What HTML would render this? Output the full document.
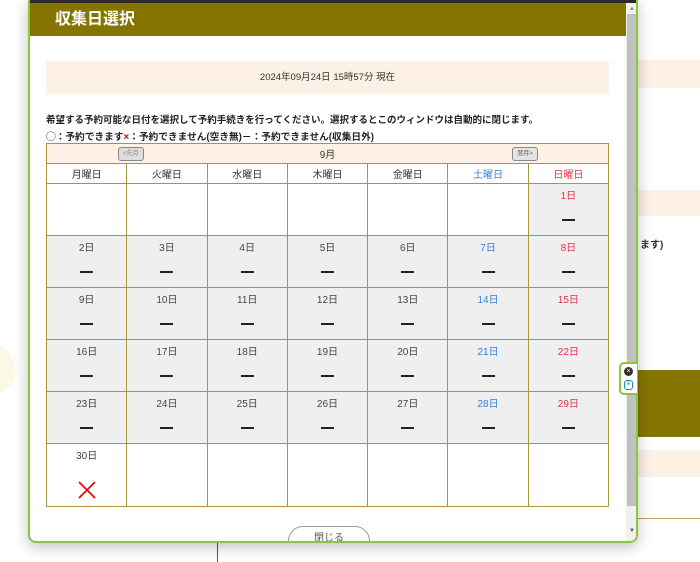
<!DOCTYPE html>
<html><head><meta charset="utf-8"><style>
*{margin:0;padding:0;box-sizing:border-box}
body{width:700px;height:562px;overflow:hidden;background:#fff;font-family:"Liberation Sans","Noto Sans CJK JP",sans-serif;position:relative;color:#333}
.abs{position:absolute}
.modal{left:28px;top:0;width:610px;height:543px;background:#fff;border:2px solid #8cc63f;border-top:none;border-radius:0 0 8px 8px;box-shadow:0 4px 14px rgba(0,0,0,.25);overflow:hidden}
table{border-collapse:collapse;position:absolute;left:16px;top:143px;width:563px;table-layout:fixed;font-size:10px}
td{border:1px solid #a8963a;text-align:center;vertical-align:top}
.hd td{height:20px;vertical-align:middle}
.r td{height:52px;background:#efefef}
.r td.w{background:#fff}
.r6 td{height:63px;background:#fff}
.d{display:block;margin-top:3px;font-size:10px;color:#444}
.dash{display:block;width:13px;height:2px;background:#222;margin:17px auto 0}
.sa{color:#3b7dd8!important}.su{color:#e0344e!important}
</style></head><body>
<div class="abs" style="left:637px;top:60px;width:63px;height:28px;background:#fdf1e6"></div>
<div class="abs" style="left:637px;top:190px;width:63px;height:26px;background:#fdf1e6"></div>
<div class="abs" style="left:640px;top:236px;font-size:10px;font-weight:bold">ます)</div>
<div class="abs" style="left:637px;top:370px;width:63px;height:67px;background:#857500"></div>
<div class="abs" style="left:637px;top:450px;width:63px;height:27px;background:#fdf1e6"></div>
<div class="abs" style="left:218px;top:518px;width:482px;height:1px;background:#b9a65a"></div>
<div class="abs" style="left:217px;top:540px;width:1px;height:22px;background:#555"></div>
<div class="abs" style="left:-30px;top:345px;width:45px;height:50px;border-radius:50%;background:#fdf8e4"></div>

<div class="abs modal">
<div class="abs" style="left:0;top:0;width:608px;height:3px;background:#2b2b2b"></div>
<div class="abs" style="left:0;top:3px;width:596px;height:33px;background:#857500;color:#fff;font-weight:bold;font-size:16px;line-height:33px;padding-left:25px">収集日選択</div>
<div class="abs" style="left:16px;top:61px;width:563px;height:33px;background:#fdf1e6;font-size:9.5px;text-align:center;line-height:33px;color:#333">2024年09月24日 15時57分 現在</div>
<div class="abs" style="left:16px;top:112px;font-size:9.5px;font-weight:bold;color:#222;white-space:nowrap">希望する予約可能な日付を選択して予約手続きを行ってください。選択するとこのウィンドウは自動的に閉じます。</div>
<div class="abs" style="left:16px;top:129px;font-size:9.7px;font-weight:bold;color:#222;white-space:nowrap">◯：予約できます<span style="color:#e00">×</span>：予約できません(空き無)－：予約できません(収集日外)</div>
<table>
<tr class="hd"><td colspan="7" style="background:#fdf1e6;position:relative">9月
<span class="abs" style="left:71px;top:3px;width:26px;height:14px;border:1px solid #888;border-radius:3px;background:#ddd;font-size:6px;line-height:12px;color:#888">&lt;先月</span>
<span class="abs" style="left:465px;top:3px;width:26px;height:14px;border:1px solid #888;border-radius:3px;background:#e4e4e4;font-size:6px;line-height:12px;color:#555">翌月&gt;</span></td></tr>
<tr class="hd"><td>月曜日</td><td>火曜日</td><td>水曜日</td><td>木曜日</td><td>金曜日</td><td class="sa">土曜日</td><td class="su">日曜日</td></tr>
<tr class="r"><td class="w"></td><td class="w"></td><td class="w"></td><td class="w"></td><td class="w"></td><td class="w"></td><td><span class="d su">1日</span><span class="dash"></span></td></tr>
<tr class="r"><td><span class="d">2日</span><span class="dash"></span></td><td><span class="d">3日</span><span class="dash"></span></td><td><span class="d">4日</span><span class="dash"></span></td><td><span class="d">5日</span><span class="dash"></span></td><td><span class="d">6日</span><span class="dash"></span></td><td><span class="d sa">7日</span><span class="dash"></span></td><td><span class="d su">8日</span><span class="dash"></span></td></tr>
<tr class="r"><td><span class="d">9日</span><span class="dash"></span></td><td><span class="d">10日</span><span class="dash"></span></td><td><span class="d">11日</span><span class="dash"></span></td><td><span class="d">12日</span><span class="dash"></span></td><td><span class="d">13日</span><span class="dash"></span></td><td><span class="d sa">14日</span><span class="dash"></span></td><td><span class="d su">15日</span><span class="dash"></span></td></tr>
<tr class="r"><td><span class="d">16日</span><span class="dash"></span></td><td><span class="d">17日</span><span class="dash"></span></td><td><span class="d">18日</span><span class="dash"></span></td><td><span class="d">19日</span><span class="dash"></span></td><td><span class="d">20日</span><span class="dash"></span></td><td><span class="d sa">21日</span><span class="dash"></span></td><td><span class="d su">22日</span><span class="dash"></span></td></tr>
<tr class="r"><td><span class="d">23日</span><span class="dash"></span></td><td><span class="d">24日</span><span class="dash"></span></td><td><span class="d">25日</span><span class="dash"></span></td><td><span class="d">26日</span><span class="dash"></span></td><td><span class="d">27日</span><span class="dash"></span></td><td><span class="d sa">28日</span><span class="dash"></span></td><td><span class="d su">29日</span><span class="dash"></span></td></tr>
<tr class="r6"><td><span class="d">30日</span><svg width="20" height="20" viewBox="0 0 20 20" style="display:block;margin:18px auto 0"><path d="M2 2L18 18M18 2L2 18" stroke="#e00" stroke-width="1.6"/></svg></td><td></td><td></td><td></td><td></td><td></td><td></td></tr>
</table>
<div class="abs" style="left:258px;top:526px;width:82px;height:30px;border:1px solid #999;border-radius:15px;font-size:10px;text-align:center;line-height:24px;color:#555">閉じる</div>
<div class="abs" style="left:596px;top:3px;width:12px;height:545px;background:#f0f0f0"></div>
<div class="abs" style="left:597px;top:14px;width:10px;height:492px;background:#c1c1c1"></div>
<div class="abs" style="left:599px;top:6px;font-size:6px;color:#888">▲</div>
<div class="abs" style="left:599px;top:528px;font-size:6px;color:#555">▼</div>
</div>
<div class="abs" style="left:619px;top:362px;width:18px;height:33px;border:2px solid #8cc63f;border-right:none;border-radius:5px 0 0 5px;background:#fff">
<div class="abs" style="left:3px;top:3px;width:9px;height:9px;border-radius:50%;background:#333;color:#fff;font-size:7px;line-height:9px;text-align:center">×</div>
<div class="abs" style="left:3px;top:16px;width:9px;height:10px;border:1.5px solid #1a8fa8;border-radius:3px;color:#1a8fa8;font-size:6px;line-height:7px;text-align:center">e</div>
</div>
</body></html>
